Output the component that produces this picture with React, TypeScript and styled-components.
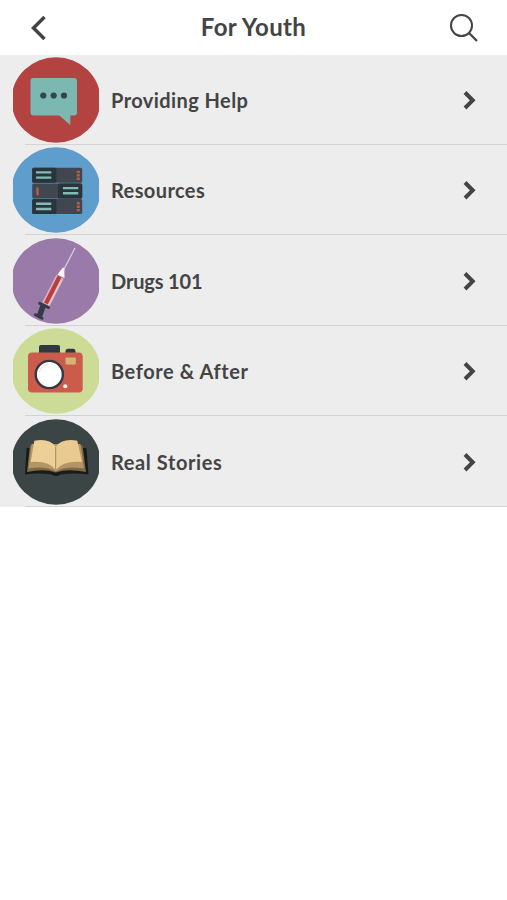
import React from "react";
import styled, { createGlobalStyle } from "styled-components";

const GlobalStyle = createGlobalStyle`
  * { box-sizing: border-box; }
  body { margin: 0; background: #fff; font-family: Lato, "Open Sans", sans-serif; color: #444; }
`;

const Screen = styled.main`
  width: 507px;
  min-height: 900px;
  background: #fff;
`;

const Header = styled.header`
  height: 55px;
  display: grid;
  grid-template-columns: 60px 1fr 60px;
  align-items: center;
`;

const IconButton = styled.button<{ $align: "left" | "right" }>`
  display: flex;
  justify-content: ${(p) => (p.$align === "left" ? "flex-start" : "flex-end")};
  padding: ${(p) => (p.$align === "left" ? "0 0 0 30px" : "0 28px 0 0")};
  border: 0;
  background: none;
`;

const Title = styled.h1`
  margin: 0;
  padding-bottom: 1px;
  text-align: center;
  font-size: 24px;
  line-height: 30px;
  font-weight: 700;
  letter-spacing: 0.35px;
  white-space: nowrap;
`;

const List = styled.ul`
  margin: 0;
  padding: 0;
  list-style: none;
  background: #ededed;
`;

const Row = styled.li`
  height: 90.4px;
  padding: 2px 30px 0 13px;
  display: grid;
  grid-template-columns: 86px 1fr 14px;
  column-gap: 12px;
  align-items: start;
  background: linear-gradient(#d3d3d3, #d3d3d3) 25px 100% / 100% 1.4px no-repeat;
`;

const Label = styled.span<{ $spacing: number }>`
  height: 86px;
  display: flex;
  align-items: center;
  font-size: 20px;
  font-weight: 700;
  white-space: pre;
  letter-spacing: ${(p) => p.$spacing}px;
`;

const Arrow = styled.span`
  height: 86px;
  display: flex;
  align-items: center;
`;

const Badge = styled.svg`
  display: block;
  width: 86px;
  height: 86px;
`;

function Disc({ color, children }: { color: string; children: React.ReactNode }) {
  return (
    <Badge viewBox="0 0 86 86" aria-hidden>
      <ellipse cx="43" cy="43" rx="44.5" ry="42.8" fill={color} />
      {children}
    </Badge>
  );
}

const Chat = () => (
  <Disc color="#b34341">
    <path d="M20.5 21H61q3 0 3 3v31.6q0 3-3 3h-3.700V68L46.300 58.600H20.500q-3 0-3-3V24q0-3 3-3Z" fill="#7bb8b1" />
    {[30.3, 40.7, 51].map((x) => (
      <circle key={x} cx={x} cy="38.5" r="3.100" fill="#354453" />
    ))}
  </Disc>
);

const Unit = ({ y, flipped }: { y: number; flipped?: boolean }) => (
  <g>
    <rect x="19.2" y={y} width="50" height="15" rx="1.5" fill="#414750" />
    <rect x={flipped ? 45 : 19.2} y={y} width="24.2" height="15" rx="1.5" fill="#29343d" />
    <path
      d={`M${flipped ? 50 : 23} ${y + 4.700}h15.300m-15.300 5.200h15.300`}
      stroke="#82bbb5"
      strokeWidth="2.400"
    />
    {flipped ? (
      <path d={`M24.500 ${y + 4}v8`} stroke="#ba5b42" strokeWidth="2.400" />
    ) : (
      <path d={`M65.300 ${y + 3}v9.400`} stroke="#ba5b42" strokeWidth="3" strokeDasharray="2.400 1" />
    )}
  </g>
);

const Servers = () => (
  <Disc color="#5f9dcc">
    <Unit y={20.700} />
    <Unit y={36.400} flipped />
    <Unit y={52.100} />
  </Disc>
);

const Syringe = () => (
  <Disc color="#997aa9">
    <path d="M62 10 50 33" stroke="#dfcfe3" strokeWidth="1.200" />
    <path d="m49.800 29.500 1.500.8.200 9.700-7.200-3.300Z" fill="#fff8fb" />
    <path d="m43.300 37 7.400 3.800L36.500 68.200l-7.300-3.700Z" fill="#ddb5bd" />
    <path d="m46.600 38.500-13.700 27" stroke="#b83f3f" strokeWidth="4.200" />
    <path d="m48 43-12.400 24" stroke="#efd5da" strokeWidth=".8" />
    <path d="m26.700 65.300 8.700 4.200" stroke="#343b46" strokeWidth="3" strokeLinecap="round" />
    <path d="m30 68-3.500 10" stroke="#343b46" strokeWidth="5.500" />
    <path d="m22.500 76.800 6.500 3.500" stroke="#343b46" strokeWidth="3" strokeLinecap="round" />
  </Disc>
);

const Camera = () => (
  <Disc color="#ccdb96">
    <rect x="26" y="17" width="21" height="11" rx="2" fill="#30383f" />
    <rect x="52.500" y="20.700" width="10" height="8" rx="2.500" fill="#30383f" />
    <rect x="15" y="24.500" width="54.700" height="40" rx="4" fill="#cb5c4c" />
    <rect x="52.500" y="29.500" width="10.300" height="6.900" rx="1" fill="#d3b676" />
    <circle cx="36.300" cy="46.500" r="13.600" fill="#fff" stroke="#343943" strokeWidth="2.400" />
    <path d="M26.500 44q2-7 9-8" fill="none" stroke="#edcbd1" strokeWidth=".8" />
    <circle cx="52.300" cy="58.200" r="2" fill="#fff2e8" />
  </Disc>
);

const Book = () => (
  <Disc color="#3c4546">
    <path d="M13.500 29h60l2 26.500q-16-2-28 0-4.800 3-9 0-13-2-26.500 0Z" fill="#171b1b" />
    <path d="M17 26.500 14 53q17-3.500 28.700.5Q55 49.500 73 53l-3.500-26.500Z" fill="#806848" />
    <path d="M18.500 25 15.500 49.500q17-3 27.200 3Q53 46.500 71 49.500L67.500 25Z" fill="#b39666" />
    <path d="M21.300 21.700Q37 19 42.700 28v23Q36 41.500 17.700 43Z" fill="#edcf98" />
    <path d="M64.300 21.700Q48.500 19 42.700 28v23Q50 41.500 69 43Z" fill="#e9ca91" />
    <path d="M42.700 28v23" stroke="#aa8a5b" strokeWidth="1" />
  </Disc>
);

const items = [
  { label: "Providing Help", icon: <Chat />, spacing: 0.42 },
  { label: "Resources", icon: <Servers />, spacing: 0.4 },
  { label: "Drugs 101", icon: <Syringe />, spacing: -0.15 },
  { label: "Before & After", icon: <Camera />, spacing: 0.57 },
  { label: "Real Stories", icon: <Book />, spacing: 0.6 },
];

export default function App() {
  return (
    <Screen>
      <GlobalStyle />
      <Header>
        <IconButton $align="left" aria-label="Back">
          <svg width="18" height="26" viewBox="0 0 18 26" fill="none" stroke="#444" strokeWidth="3.500">
            <path d="M14.500 2 3.500 13l11 11" />
          </svg>
        </IconButton>
        <Title>For Youth</Title>
        <IconButton $align="right" aria-label="Search">
          <svg width="30" height="30" viewBox="0 0 30 30" fill="none" stroke="#444" strokeWidth="2">
            <circle cx="12.500" cy="12.500" r="10.500" />
            <path d="m20 20 8 8" strokeWidth="2.300" />
          </svg>
        </IconButton>
      </Header>
      <List>
        {items.map((item) => (
          <Row key={item.label}>
            {item.icon}
            <Label $spacing={item.spacing}>{item.label}</Label>
            <Arrow>
              <svg width="14" height="20" viewBox="0 0 14 20" fill="none" stroke="#444" strokeWidth="4">
                <path d="m2 2.500 7.700 7.800L2 18" />
              </svg>
            </Arrow>
          </Row>
        ))}
      </List>
    </Screen>
  );
}
